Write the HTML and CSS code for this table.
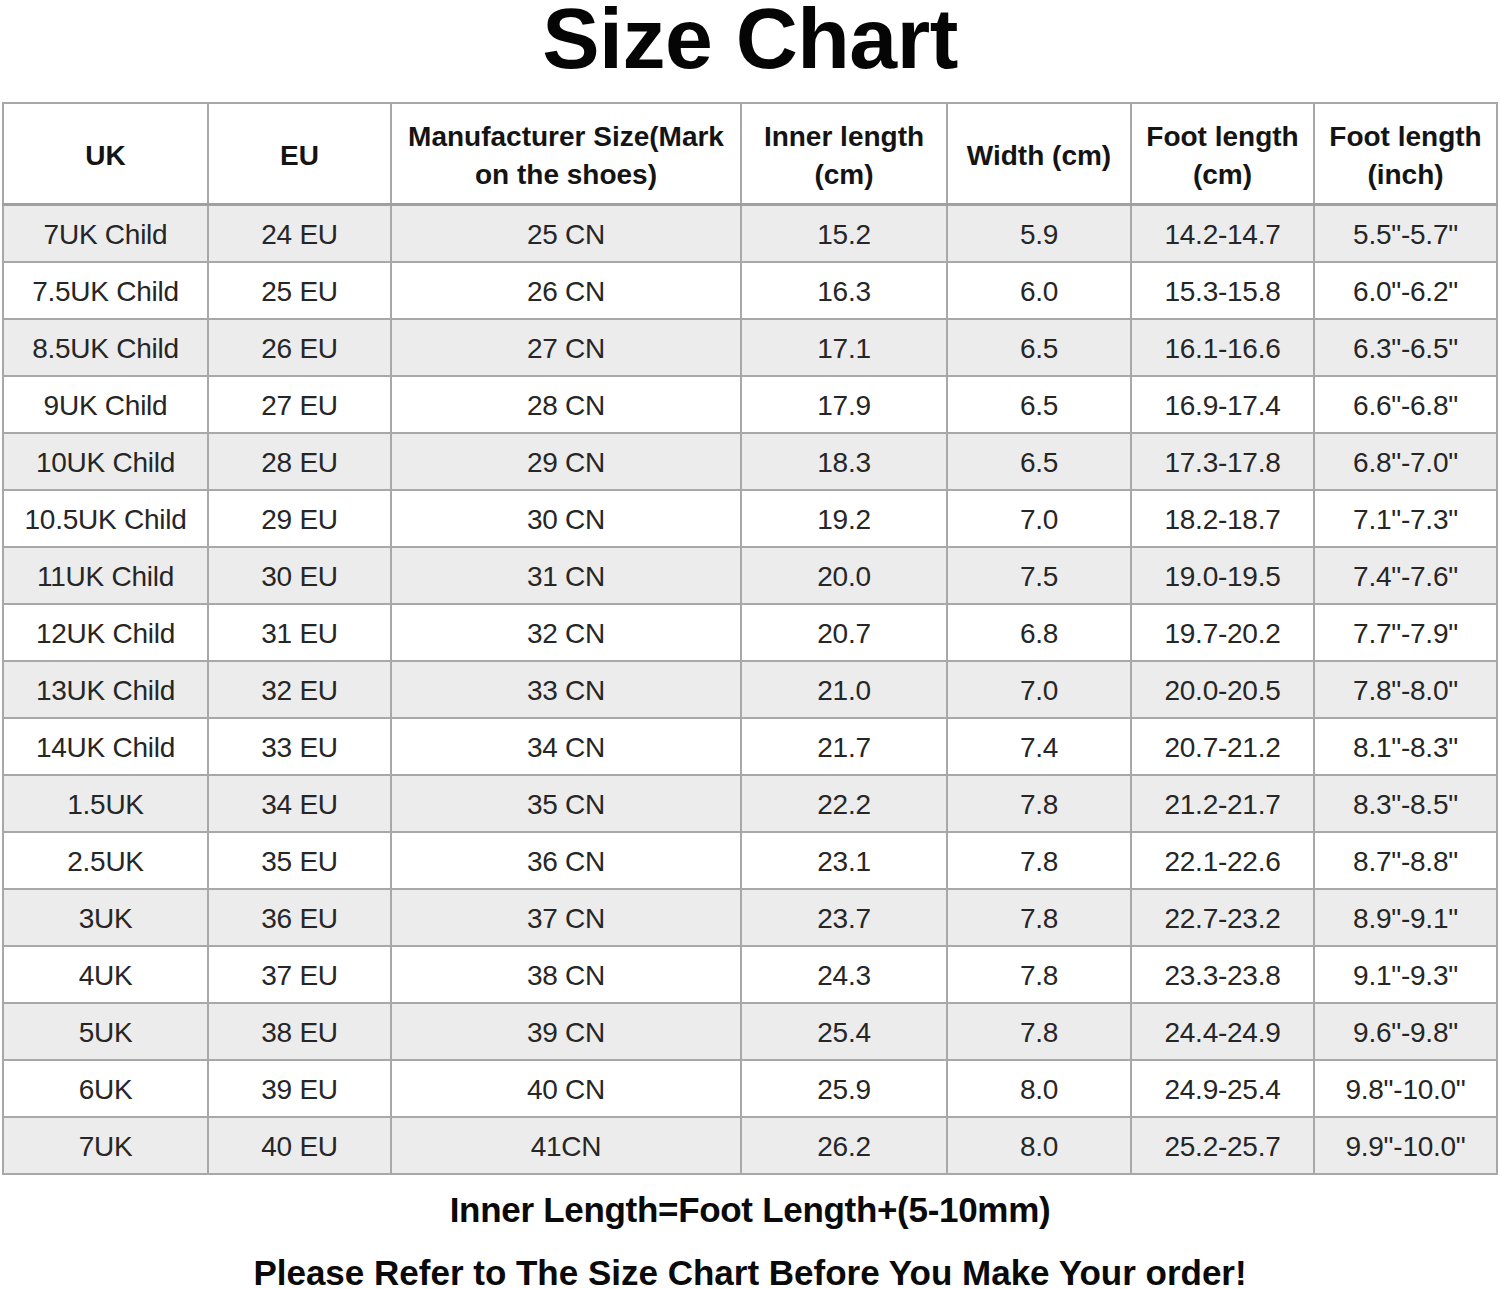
FILE: index.html
```html
<!DOCTYPE html>
<html>
<head>
<meta charset="utf-8">
<link rel="stylesheet" href="styles.css">
</head>
<body>
<div class="page">
  <h1 class="title">Size Chart</h1>
  <table class="chart">
    <colgroup>
      <col class="c1"><col class="c2"><col class="c3"><col class="c4"><col class="c5"><col class="c6"><col class="c7">
    </colgroup>
    <thead>
      <tr>
        <th>UK</th><th>EU</th><th>Manufacturer Size(Mark<br>on the shoes)</th><th>Inner length<br>(cm)</th><th>Width (cm)</th><th>Foot length<br>(cm)</th><th>Foot length<br>(inch)</th>
      </tr>
    </thead>
    <tbody>
      <tr><td>7UK Child</td><td>24 EU</td><td>25 CN</td><td>15.2</td><td>5.9</td><td>14.2-14.7</td><td>5.5"-5.7"</td></tr>
      <tr><td>7.5UK Child</td><td>25 EU</td><td>26 CN</td><td>16.3</td><td>6.0</td><td>15.3-15.8</td><td>6.0"-6.2"</td></tr>
      <tr><td>8.5UK Child</td><td>26 EU</td><td>27 CN</td><td>17.1</td><td>6.5</td><td>16.1-16.6</td><td>6.3"-6.5"</td></tr>
      <tr><td>9UK Child</td><td>27 EU</td><td>28 CN</td><td>17.9</td><td>6.5</td><td>16.9-17.4</td><td>6.6"-6.8"</td></tr>
      <tr><td>10UK Child</td><td>28 EU</td><td>29 CN</td><td>18.3</td><td>6.5</td><td>17.3-17.8</td><td>6.8"-7.0"</td></tr>
      <tr><td>10.5UK Child</td><td>29 EU</td><td>30 CN</td><td>19.2</td><td>7.0</td><td>18.2-18.7</td><td>7.1"-7.3"</td></tr>
      <tr><td>11UK Child</td><td>30 EU</td><td>31 CN</td><td>20.0</td><td>7.5</td><td>19.0-19.5</td><td>7.4"-7.6"</td></tr>
      <tr><td>12UK Child</td><td>31 EU</td><td>32 CN</td><td>20.7</td><td>6.8</td><td>19.7-20.2</td><td>7.7"-7.9"</td></tr>
      <tr><td>13UK Child</td><td>32 EU</td><td>33 CN</td><td>21.0</td><td>7.0</td><td>20.0-20.5</td><td>7.8"-8.0"</td></tr>
      <tr><td>14UK Child</td><td>33 EU</td><td>34 CN</td><td>21.7</td><td>7.4</td><td>20.7-21.2</td><td>8.1"-8.3"</td></tr>
      <tr><td>1.5UK</td><td>34 EU</td><td>35 CN</td><td>22.2</td><td>7.8</td><td>21.2-21.7</td><td>8.3"-8.5"</td></tr>
      <tr><td>2.5UK</td><td>35 EU</td><td>36 CN</td><td>23.1</td><td>7.8</td><td>22.1-22.6</td><td>8.7"-8.8"</td></tr>
      <tr><td>3UK</td><td>36 EU</td><td>37 CN</td><td>23.7</td><td>7.8</td><td>22.7-23.2</td><td>8.9"-9.1"</td></tr>
      <tr><td>4UK</td><td>37 EU</td><td>38 CN</td><td>24.3</td><td>7.8</td><td>23.3-23.8</td><td>9.1"-9.3"</td></tr>
      <tr><td>5UK</td><td>38 EU</td><td>39 CN</td><td>25.4</td><td>7.8</td><td>24.4-24.9</td><td>9.6"-9.8"</td></tr>
      <tr><td>6UK</td><td>39 EU</td><td>40 CN</td><td>25.9</td><td>8.0</td><td>24.9-25.4</td><td>9.8"-10.0"</td></tr>
      <tr><td>7UK</td><td>40 EU</td><td>41CN</td><td>26.2</td><td>8.0</td><td>25.2-25.7</td><td>9.9"-10.0"</td></tr>
    </tbody>
  </table>
  <p class="note note-first">Inner Length=Foot Length+(5-10mm)</p>
  <p class="note">Please Refer to The Size Chart Before You Make Your order!</p>
</div>
</body>
</html>
```
FILE: styles.css
```css
html, body {
  margin: 0;
  padding: 0;
  background: #ffffff;
}
body {
  font-family: "Liberation Sans", Arial, sans-serif;
  color: #111111;
}
.page {
  width: 1500px;
}
.title {
  margin: 0;
  height: 102px;
  font-size: 86px;
  font-weight: bold;
  line-height: 76px;
  text-align: center;
  color: #050505;
  letter-spacing: -0.5px;
}
.chart {
  margin-left: 2px;
  width: 1494px;
  border-collapse: collapse;
  table-layout: fixed;
}
.c1 { width: 205px; }
.c2 { width: 183px; }
.c3 { width: 350px; }
.c4 { width: 206px; }
.c5 { width: 184px; }
.c6 { width: 183px; }
.c7 { width: 183px; }
.chart th,
.chart td {
  border: 2px solid #a8a8a8;
  text-align: center;
  padding: 0;
}
.chart th {
  height: 95px;
  padding-top: 4px;
  font-size: 28px;
  line-height: 38px;
  font-weight: bold;
  color: #141414;
  border-bottom: 3px solid #a0a0a0;
}
.chart td {
  height: 52px;
  padding-top: 3px;
  font-size: 28px;
  line-height: 30px;
  color: #262626;
  letter-spacing: -0.25px;
}
.chart tbody tr:nth-child(odd) td {
  background: #ececec;
}
.note {
  margin: 0;
  text-align: center;
  font-size: 35px;
  font-weight: bold;
  color: #0a0a0a;
  line-height: 36px;
}
.note-first {
  margin-top: 17px;
  margin-bottom: 27px;
  letter-spacing: -0.3px;
}
```
